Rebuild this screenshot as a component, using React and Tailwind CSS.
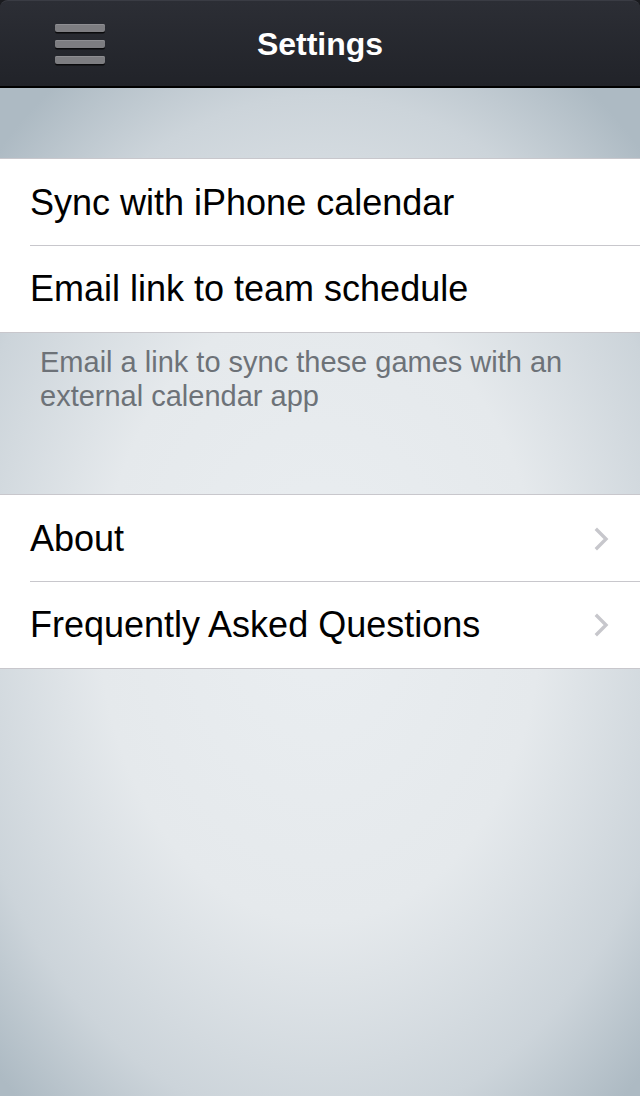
import React from "react";

const Chevron = () => (
  <svg width="16" height="24" viewBox="0 0 16 24" fill="none" className="shrink-0">
    <path d="M3 3l9 9-9 9" stroke="#c7c7cc" strokeWidth="3.4" strokeLinecap="square" strokeLinejoin="miter" />
  </svg>
);

const Row = ({ label, arrow, last }) => (
  <div className={`relative flex items-center bg-white ${last ? "h-[86px]" : "h-[87px]"}`}>
    <div className="flex h-[86px] flex-1 items-center justify-between pl-[30px] pr-[30px]">
      <span className="text-[36px] leading-none text-black">{label}</span>
      {arrow && <Chevron />}
    </div>
    {!last && <div className="absolute bottom-0 left-[30px] right-0 h-px bg-[#c8c7cc]" />}
  </div>
);

const Group = ({ items }) => (
  <div className="border-t border-b border-[#c8c7cc] bg-white">
    {items.map((item, i) => (
      <Row key={item.label} label={item.label} arrow={item.arrow} last={i === items.length - 1} />
    ))}
  </div>
);

export default function App() {
  return (
    <div className="flex h-[1096px] w-[640px] flex-col bg-[#1a1b1f] font-['Liberation_Sans',Arial,sans-serif]">
      {/* Nav bar */}
      <header className="relative flex h-[86px] items-center justify-center rounded-t-[8px] border-t border-[#3a3c44] bg-gradient-to-b from-[#2c2e35] to-[#212329]">
        <button type="button" className="absolute left-[55px] top-[23px] flex flex-col gap-[8px]">
          <span className="block h-[8px] w-[50px] rounded-[2px] bg-[#7d7d81] shadow-[inset_0_1px_0_#8e8e92,0_1.5px_0_#0a0a0c]" />
          <span className="block h-[8px] w-[50px] rounded-[2px] bg-[#7d7d81] shadow-[inset_0_1px_0_#8e8e92,0_1.5px_0_#0a0a0c]" />
          <span className="block h-[8px] w-[50px] rounded-[2px] bg-[#7d7d81] shadow-[inset_0_1px_0_#8e8e92,0_1.5px_0_#0a0a0c]" />
        </button>
        <h1 className="text-[32px] font-bold text-white">Settings</h1>
      </header>
      <div className="h-[2px] bg-black" />

      {/* Content */}
      <main className="flex-1 bg-[radial-gradient(ellipse_72%_64%_at_50%_52%,#eaeef1_0%,#e5e9ec_48%,#ccd4da_80%,#adbac3_100%)]">
        <div className="h-[70px]" />
        <Group
          items={[
            { label: "Sync with iPhone calendar" },
            { label: "Email link to team schedule" },
          ]}
        />
        <div className="h-[161px] px-[40px] pt-[12px]">
          <p className="text-[29px] leading-[34px] text-[#6d7278]">
            Email a link to sync these games with an external calendar app
          </p>
        </div>
        <Group
          items={[
            { label: "About", arrow: true },
            { label: "Frequently Asked Questions", arrow: true },
          ]}
        />
      </main>
    </div>
  );
}
